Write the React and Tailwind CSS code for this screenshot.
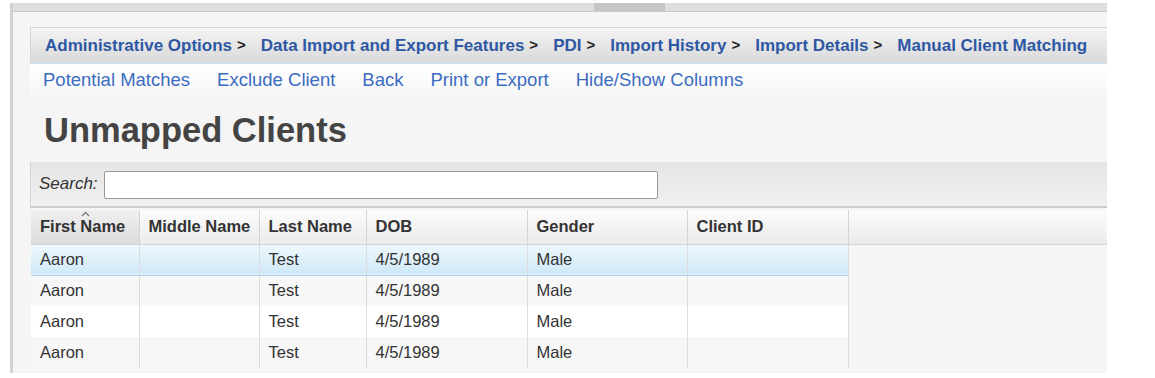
import React from "react";

const crumbs = [
  "Administrative Options",
  "Data Import and Export Features",
  "PDI",
  "Import History",
  "Import Details",
];

const actions = ["Potential Matches", "Exclude Client", "Back", "Print or Export", "Hide/Show Columns"];

const columns = [
  { label: "First Name", w: "w-[108px]" },
  { label: "Middle Name", w: "w-[120px]" },
  { label: "Last Name", w: "w-[107px]" },
  { label: "DOB", w: "w-[161px]" },
  { label: "Gender", w: "w-[160px]" },
  { label: "Client ID", w: "w-[161px]" },
];

const rows = [
  { first: "Aaron", middle: "", last: "Test", dob: "4/5/1989", gender: "Male", id: "" },
  { first: "Aaron", middle: "", last: "Test", dob: "4/5/1989", gender: "Male", id: "" },
  { first: "Aaron", middle: "", last: "Test", dob: "4/5/1989", gender: "Male", id: "" },
  { first: "Aaron", middle: "", last: "Test", dob: "4/5/1989", gender: "Male", id: "" },
];

const App = () => {
  return (
    <div className="w-[1155px] h-[378px] overflow-hidden bg-white font-['Liberation_Sans',Arial,sans-serif]">
      <div className="ml-[10px] mt-[3px] w-[1097px] h-[370px] border-l-[3px] border-[#d2d2d2] bg-[#f5f5f5]">
        {/* top scroll strip */}
        <div className="h-[9px] bg-[#dedede] border-b border-[#c9c9c9] flex">
          <div className="w-[581px]" />
          <div className="w-[71px] bg-[#c6c6c6]" />
        </div>

        <div className="pl-[17px] pt-[15px]">
          {/* breadcrumb */}
          <div className="h-[37px] border-t border-l border-[#d6d6d6] border-b border-b-[#cfe2f3] bg-linear-to-b from-[#f4f4f4] to-[#d9d9d9] flex items-center pl-[14px] text-[17px] font-bold whitespace-nowrap">
            {crumbs.map((c) => (
              <span key={c} className="flex items-center">
                <span className="text-[#2e58a3]">{c}</span>
                <span className="ml-[5px] mr-[15px] text-[#222] text-[15px]">&gt;</span>
              </span>
            ))}
            <span className="text-[#2e58a3]">Manual Client Matching</span>
          </div>

          {/* actions */}
          <div className="h-[32px] bg-linear-to-b from-white to-[#f7f7f7] flex items-center pl-[13px] gap-[27px] text-[18.5px] text-[#3b6cc1] whitespace-nowrap">
            {actions.map((a) => (
              <span key={a}>{a}</span>
            ))}
          </div>

          {/* title */}
          <div className="h-[66px] flex items-center pl-[14px] pt-[2px]">
            <h1 className="text-[34.5px] font-bold text-[#444] leading-none">Unmapped Clients</h1>
          </div>

          {/* search bar */}
          <div className="h-[46px] border-l border-[#d6d6d6] border-b-2 border-b-[#cdcdcd] bg-linear-to-b from-[#e5e5e5] to-[#f0f0f0] flex items-center pl-[8px]">
            <span className="italic text-[17px] text-[#333]">Search:</span>
            <input
              type="text"
              className="ml-[6px] mt-[2px] w-[554px] h-[28px] bg-white border border-[#9a9a9a] rounded-[2px]"
            />
          </div>

          {/* table */}
          <table className="table-fixed border-collapse text-[16.5px] text-[#333] ml-[1px]">
            <thead>
              <tr className="h-[35px]">
                {columns.map((c, i) => (
                  <th
                    key={c.label}
                    className={`${c.w} relative text-left font-bold pl-[9px] border-r border-b border-[#d4d4d4] border-t-2 border-t-[#f5f5f5] ${
                      i === 0
                        ? "bg-linear-to-b from-[#f0f0f0] to-[#dcdcdc]"
                        : "bg-linear-to-b from-[#fcfcfc] to-[#ebebeb]"
                    }`}
                  >
                    {i === 0 && (
                      <svg className="absolute left-[50px] top-[1px]" width="9" height="6" viewBox="0 0 9 6">
                        <path d="M1 5 L4.5 1.5 L8 5" fill="none" stroke="#777" strokeWidth="1.3" />
                      </svg>
                    )}
                    {c.label}
                  </th>
                ))}
                <th className="w-[259px] border-b border-[#d4d4d4] border-t-2 border-t-[#f5f5f5] border-l border-l-white bg-linear-to-b from-[#fcfcfc] to-[#ebebeb]" />
              </tr>
            </thead>
            <tbody>
              {rows.map((r, i) => {
                const selected = i === 0;
                const odd = i % 2 === 1;
                const rowBg = selected
                  ? "bg-linear-to-b from-[#eef8fd] to-[#cfe9f7] border-b border-b-[#a8d3ef]"
                  : odd
                  ? "bg-[#f7f7f7]"
                  : "bg-white";
                const firstBg = selected
                  ? ""
                  : odd
                  ? "bg-[#e3e3e3]"
                  : "bg-[#efefef]";
                const cells = [r.first, r.middle, r.last, r.dob, r.gender, r.id];
                return (
                  <tr key={i} className="h-[31px]">
                    {cells.map((v, j) => (
                      <td
                        key={j}
                        className={`pl-[9px] border-r border-[#dcdcdc] ${rowBg} ${j === 0 ? firstBg : ""}`}
                      >
                        {v}
                      </td>
                    ))}
                  </tr>
                );
              })}
            </tbody>
          </table>
        </div>
      </div>
    </div>
  );
};

export default App;
